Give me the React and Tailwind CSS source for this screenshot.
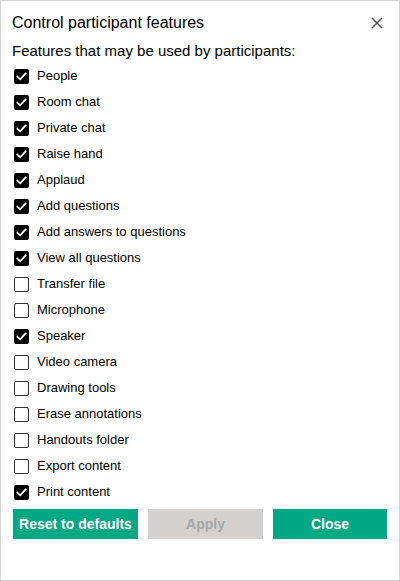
import React, { useState } from 'react';

const FEATURES = [
  ['People', true],
  ['Room chat', true],
  ['Private chat', true],
  ['Raise hand', true],
  ['Applaud', true],
  ['Add questions', true],
  ['Add answers to questions', true],
  ['View all questions', true],
  ['Transfer file', false],
  ['Microphone', false],
  ['Speaker', true],
  ['Video camera', false],
  ['Drawing tools', false],
  ['Erase annotations', false],
  ['Handouts folder', false],
  ['Export content', false],
  ['Print content', true],
];

function CheckBox({ checked }) {
  if (checked) {
    return (
      <span className="w-[15px] h-[15px] rounded-[2px] bg-black flex items-center justify-center shrink-0">
        <svg width="11" height="11" viewBox="0 0 11 11" fill="none">
          <path d="M1.5 5.8 L4.2 8.3 L9.5 2.5" stroke="white" strokeWidth="1.8" strokeLinecap="square" />
        </svg>
      </span>
    );
  }
  return <span className="w-[15px] h-[15px] rounded-[2px] border-[1.5px] border-[#333] bg-white shrink-0" />;
}

export default function App() {
  const [features] = useState(FEATURES);

  return (
    <div
      className="w-[400px] h-[581px] bg-white border border-[#d6d6d6] text-black flex flex-col"
      style={{ fontFamily: '"Liberation Sans", Arial, sans-serif' }}
    >
      {/* Title bar */}
      <div className="flex items-center justify-between pl-[11px] pr-[16px] pt-[12px]">
        <h1 className="text-[16px] leading-[20px]">Control participant features</h1>
        <svg width="12" height="12" viewBox="0 0 12 12" className="text-[#555]">
          <path d="M1 1 L11 11 M11 1 L1 11" stroke="currentColor" strokeWidth="1.5" />
        </svg>
      </div>

      <p className="pl-[11px] mt-[8px] text-[15px] leading-[20px]">Features that may be used by participants:</p>

      <ul className="mt-[2px] pl-[13px]">
        {features.map(([label, on]) => (
          <li key={label} className="h-[26px] flex items-center gap-[8px]">
            <CheckBox checked={on} />
            <span className="text-[13px] leading-[16px]">{label}</span>
          </li>
        ))}
      </ul>

      <div className="flex gap-[10px] pl-[12px] mt-[4px]">
        <button className="w-[125px] h-[30px] bg-[#00a884] text-white text-[14px] font-bold whitespace-nowrap">Reset to defaults</button>
        <button className="w-[115px] h-[30px] bg-[#d2d1d0] text-[#a6a6a6] text-[14px] font-bold" disabled>Apply</button>
        <button className="w-[114px] h-[30px] bg-[#00a884] text-white text-[14px] font-bold">Close</button>
      </div>
    </div>
  );
}
